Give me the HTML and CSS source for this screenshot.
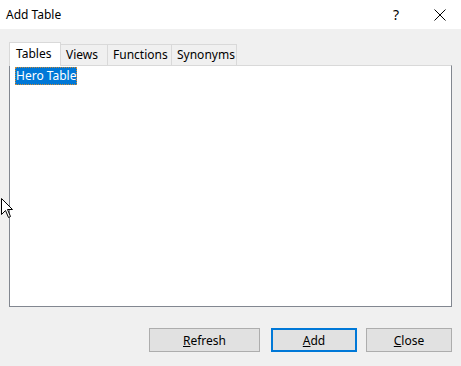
FILE: index.html
```html
<!DOCTYPE html>
<html lang="en">
<head>
  <meta charset="UTF-8" />
  <title>Add Table</title>
  <link rel="stylesheet" href="styles.css">
</head>
<body>

  <div class="dialog">
    <div class="titlebar">
      <span class="title">Add Table</span>
      <span class="help">?</span>
      <span class="close-x">
        <svg width="12" height="12" viewBox="0 0 12 12"><path d="M0.5 0.5 L11.5 11.5 M11.5 0.5 L0.5 11.5" stroke="#000" stroke-width="1" fill="none"/></svg>
      </span>
    </div>

    <div class="tabs">
      <div class="tab active">Tables</div>
      <div class="tab">Views</div>
      <div class="tab">Functions</div>
      <div class="tab">Synonyms</div>
    </div>

    <div class="panel">
      <div class="item selected">Hero Table</div>
    </div>

    <div class="buttons">
      <button class="btn refresh"><u>R</u>efresh</button>
      <button class="btn default"><u>A</u>dd</button>
      <button class="btn"><u>C</u>lose</button>
    </div>

    <svg class="cursor" width="12" height="20" viewBox="0 0 12 20">
      <path d="M0.5 0.5 L0.5 16.5 L4.5 12.5 L7.5 19.5 L9.5 18.5 L6.5 11.5 L11.5 11.5 Z" fill="#fff" stroke="#000" stroke-width="1"/>
    </svg>
  </div>

</body>
</html>
```

FILE: styles.css
```css
body {
  margin: 0;
  font-family: "Noto Sans", "Open Sans", sans-serif;
  font-size: 12px;
  color: #000;
  background-color: #f0f0f0;
}

.dialog {
  position: relative;
  width: 461px;
  height: 366px;
  overflow: hidden;
}

.titlebar {
  height: 29px;
  background-color: #fff;
  display: flex;
  align-items: center;
  padding-left: 6px;
}

.title {
  flex: 1;
}

.help {
  width: 16px;
  text-align: center;
  font-size: 14px;
  margin-right: 30px;
}

.close-x {
  display: flex;
  margin-right: 15px;
}

.tabs {
  display: flex;
  align-items: flex-end;
  margin-top: 13px;
  padding-left: 9px;
  height: 23px;
}

.tab {
  height: 20px;
  line-height: 19px;
  border: 1px solid #d9d9d9;
  border-bottom: none;
  border-left: none;
  padding: 0 5px;
  box-sizing: content-box;
}

.tab:nth-child(2) { width: 36px; }
.tab:nth-child(3) { width: 53px; }
.tab:nth-child(4) { width: 54px; }

.tab.active {
  height: 23px;
  line-height: 21px;
  width: 40px;
  padding: 0 4px 0 6px;
  background-color: #fff;
  border-left: 1px solid #d9d9d9;
  border-bottom: none;
  margin-bottom: -1px;
  position: relative;
  z-index: 1;
}

.panel {
  margin: 0 9px;
  height: 239px;
  border: 1px solid #828790;
  border-top-color: #d9d9d9;
  background-color: #fff;
  padding: 1px 0 0 5px;
  box-sizing: content-box;
  width: 436px;
}

.item.selected {
  display: inline-block;
  background-color: #0078d7;
  color: #fff;
  padding: 0 1px;
  height: 18px;
  line-height: 17px;
  outline: 1px dotted #c88a3a;
  outline-offset: -1px;
}

.buttons {
  display: flex;
  justify-content: flex-end;
  margin-top: 21px;
  padding-right: 9px;
}

.btn {
  font-family: inherit;
  font-size: 12px;
  width: 86px;
  height: 24px;
  background-color: #e1e1e1;
  border: 1px solid #adadad;
  margin-left: 9px;
  padding: 0;
  color: #000;
}

.btn.refresh {
  width: 111px;
  margin-left: 0;
  margin-right: 2px;
}

.btn.default {
  border: 2px solid #0078d7;
}

.cursor {
  position: absolute;
  left: 1px;
  top: 198px;
}
```
